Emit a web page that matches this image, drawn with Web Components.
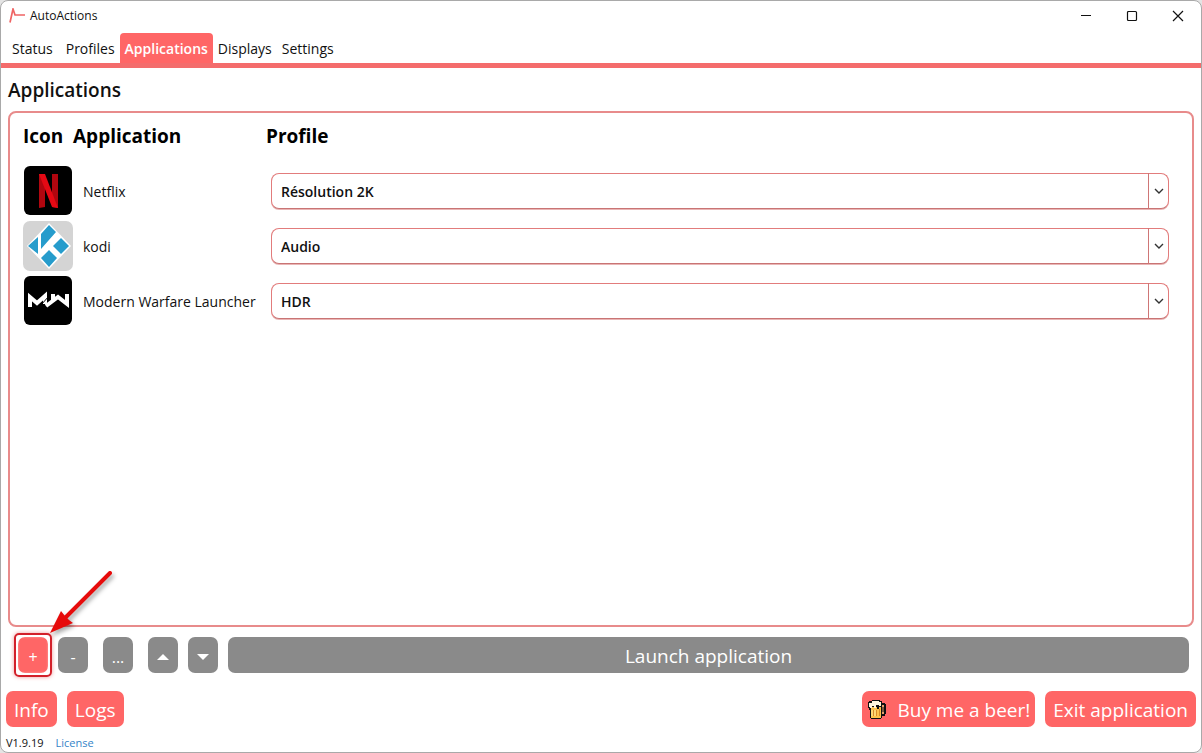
<!DOCTYPE html>
<html lang="en">
<head>
<meta charset="utf-8">
<meta name="viewport" content="width=device-width, initial-scale=1">
<title>AutoActions</title>
<style>
  :root {
    --accent: #ff6666;
    --line: #e88b8b;
    --muted: #8a8a8a;
  }
  html, body {
    margin: 0;
    height: 100%;
    background: #e4e4e4;
    font-family: "Open Sans", "Noto Sans", sans-serif;
    font-size: 14px;
    color: #111;
  }
</style>
</head>
<body>
<auto-window caption="AutoActions">
  <tab-strip slot="tabs" items="Status,Profiles,Applications,Displays,Settings" active="Applications"></tab-strip>
  <page-panel heading="Applications">
    <app-list></app-list>
  </page-panel>
  <tool-bar slot="tools"></tool-bar>
  <window-footer slot="footer" version="V1.9.19">
    <action-button slot="left">Info</action-button>
    <action-button slot="left">Logs</action-button>
    <action-button slot="right" compact><beer-icon slot="icon"></beer-icon>Buy me a beer!</action-button>
    <action-button slot="right">Exit application</action-button>
  </window-footer>
</auto-window>

<script>
function define(name, html, setup) {
  const template = document.createElement('template');
  template.innerHTML = `<style>* { box-sizing: border-box; }</style>${html}`;

  customElements.define(name, class extends HTMLElement {
    constructor() {
      super();
      this.attachShadow({ mode: 'open' });
      this.shadowRoot.appendChild(template.content.cloneNode(true));
    }

    connectedCallback() {
      if (setup && !this.ready) {
        this.ready = true;
        setup(this, this.shadowRoot);
      }
    }
  });
}

define('auto-window', `
  <style>
    :host {
      box-sizing: border-box;
      display: flex;
      flex-direction: column;
      min-height: 100vh;
      border: 1px solid #a9a9a9;
      border-radius: 8px;
      background: #fff;
      overflow: hidden;
    }
    header {
      display: flex;
      align-items: center;
      justify-content: space-between;
      height: 30px;
    }
    .title {
      display: flex;
      align-items: center;
      gap: 5px;
      padding-left: 8px;
      font-size: 12px;
      line-height: 16px;
    }
    .controls {
      display: flex;
    }
    .controls button {
      display: grid;
      place-items: center;
      width: 46px;
      height: 30px;
      padding: 0;
      border: 0;
      background: none;
    }
    svg {
      display: block;
      fill: none;
      stroke: #111;
      stroke-width: 1.2;
    }
    main {
      flex: 1;
      display: flex;
    }
  </style>
  <header>
    <div class="title">
      <svg width="16" height="16" viewBox="0 0 16 16" style="stroke:#ef6464;stroke-width:1.7"><path d="M1 14.500 4 1l2 6h10"/></svg>
      <span></span>
    </div>
    <div class="controls">
      <button aria-label="Minimize"><svg width="12" height="12"><path d="M1 5.500h10"/></svg></button>
      <button aria-label="Maximize"><svg width="12" height="12"><rect x="1.500" y="1.500" width="9" height="9" rx="1"/></svg></button>
      <button aria-label="Close"><svg width="12" height="12"><path d="m1 1 10 10M11 1 1 11"/></svg></button>
    </div>
  </header>
  <slot name="tabs"></slot>
  <main><slot></slot></main>
  <slot name="tools"></slot>
  <slot name="footer"></slot>
`, (host, root) => {
  root.querySelector('.title span').textContent = host.getAttribute('caption');
});

define('tab-strip', `
  <style>
    :host {
      display: flex;
      padding: 2px 6px 0;
      border-bottom: 5px solid #f46c6c;
    }
    button {
      height: 30px;
      padding: 0 5px;
      border: 0;
      border-radius: 4px 4px 0 0;
      background: none;
      font: inherit;
      color: inherit;
    }
    button:first-of-type {
      margin-right: 3px;
    }
    button[aria-selected=true] {
      background: var(--accent);
      color: #fff;
      font-weight: 600;
    }
  </style>
`, (host, root) => {
  host.setAttribute('role', 'tablist');
  for (const name of host.getAttribute('items').split(',')) {
    const button = document.createElement('button');
    button.setAttribute('role', 'tab');
    button.setAttribute('aria-selected', name === host.getAttribute('active'));
    button.textContent = name;
    root.appendChild(button);
  }
});

define('page-panel', `
  <style>
    :host {
      flex: 1;
      display: flex;
      flex-direction: column;
      padding: 7px 7px 0;
    }
    h1 {
      margin: 0 0 6px;
      font-size: 19px;
      line-height: 30px;
      font-weight: 600;
    }
    .frame {
      flex: 1;
      padding: 8px 23px 8px 13px;
      border: 2px solid var(--line);
      border-radius: 8px;
    }
  </style>
  <h1></h1>
  <div class="frame"><slot></slot></div>
`, (host, root) => {
  root.querySelector('h1').textContent = host.getAttribute('heading');
});

define('app-icon', `
  <style>
    :host { display: block; width: 50px; height: 50px; }
    svg { display: block; }
  </style>
`, (host, root) => {
  const icons = {
    netflix: `<rect x="1" width="48" height="49" rx="6" fill="#000"/>
      <path d="M16 8h6v33l-6 1zM29 8h6v34l-6-1z" fill="#b1060f"/>
      <path d="M16 8h6l13 34-6-1z" fill="#e50914"/>`,
    kodi: `<rect width="50" height="50" rx="7" fill="#d4d4d4"/>
      <path d="M26 2 48 25 26 48 4 25z" fill="#fff"/>
      <path fill="#269ccc" d="m26 4 7 7-15 17V13zM15 16v17l-10-8zM38 17l8 8-8 8-8-8zM26 29l8 8-8 9-8-9z"/>`,
    mw: `<rect x="1" width="48" height="49" rx="6" fill="#000"/>
      <path fill="none" stroke="#fff" stroke-width="4" d="M7 31V21l7 6 8-7v8M44 18v10l-9-7-12 9M30 18v7"/>
      <path stroke="#000" d="m18 29 8-9"/>`
  };
  root.innerHTML += `<svg width="50" height="50" viewBox="0 0 50 50">${icons[host.getAttribute('name')]}</svg>`;
});

define('profile-select', `
  <style>
    :host {
      position: relative;
      display: block;
    }
    select {
      display: block;
      width: 100%;
      height: 36px;
      padding: 1px 30px 0 9px;
      appearance: none;
      border: 1px solid #e27c7c;
      border-bottom-color: #c97474;
      border-radius: 8px;
      background: #fff;
      box-shadow: 0 1px 0 #e9b6b6;
      font: inherit;
      font-weight: 600;
      color: inherit;
    }
    /* divider and arrow lie over the right end of the select */
    .arrow {
      position: absolute;
      inset: 0 0 0 auto;
      display: grid;
      place-items: center;
      width: 21px;
      border-left: 1px solid #cf7676;
      pointer-events: none;
    }
  </style>
  <select></select>
  <span class="arrow">
    <svg width="10" height="6" fill="none" stroke="#333" stroke-width="1.4"><path d="m1 1 4 4 4-4"/></svg>
  </span>
`, (host, root) => {
  const select = root.querySelector('select');
  select.setAttribute('aria-label', host.getAttribute('label'));
  select.add(new Option(host.getAttribute('value')));
});

define('app-list', `
  <style>
    :host { display: block; }
    table {
      width: 100%;
      border-collapse: collapse;
      table-layout: fixed;
    }
    th {
      height: 30px;
      padding: 0;
      text-align: left;
      font-size: 19px;
      line-height: 24px;
      font-weight: 700;
      color: #000;
    }
    thead::after {
      content: "";
      display: block;
      height: 12px;
    }
    th:nth-child(1) { width: 50px; }
    th:nth-child(2) { width: 193px; }
    td {
      height: 55px;
      padding: 0;
      vertical-align: middle;
      white-space: nowrap;
    }
    td:nth-child(2) { padding: 1px 0 0 10px; }
    td:nth-child(3) { padding: 1px 0 0 5px; }
  </style>
  <table>
    <thead><tr><th>Icon</th><th>Application</th><th>Profile</th></tr></thead>
    <tbody></tbody>
  </table>
`, (host, root) => {
  const apps = [
    ['netflix', 'Netflix', 'Résolution 2K'],
    ['kodi', 'kodi', 'Audio'],
    ['mw', 'Modern Warfare Launcher', 'HDR']
  ];
  root.querySelector('tbody').innerHTML = apps.map(([icon, name, profile]) => `
    <tr>
      <td><app-icon name="${icon}"></app-icon></td>
      <td>${name}</td>
      <td><profile-select label="Profile for ${name}" value="${profile}"></profile-select></td>
    </tr>`).join('');
});

define('callout-mark', `
  <style>
    :host { position: relative; display: flex; }
    .ring {
      position: absolute;
      inset: -4px;
      border: 2px solid #d3202a;
      border-radius: 5px;
      box-shadow: 0 0 4px #e99, inset 0 0 3px 1px #fff;
      pointer-events: none;
    }
    svg {
      position: absolute;
      left: 29px;
      bottom: 35px;
      filter: drop-shadow(2px 3px 2px #0005);
      pointer-events: none;
    }
  </style>
  <slot></slot>
  <span class="ring"></span>
  <svg width="72" height="72" viewBox="0 0 72 72">
    <path d="M63 7 18 52" stroke="#e60b0b" stroke-width="4" stroke-linecap="round"/>
    <path d="m3 67 11-22 4 5 4 4 4 3z" fill="#e60b0b"/>
  </svg>
`);

define('tool-bar', `
  <style>
    :host {
      display: flex;
      gap: 10px;
      padding: 10px 12px 0 17px;
    }
    button {
      display: flex;
      align-items: center;
      justify-content: center;
      width: 30px;
      height: 36px;
      padding: 4px 0 0;
      border: 0;
      border-radius: 7px;
      background: var(--muted);
      color: #fff;
      font: inherit;
      font-size: 16px;
    }
    .add { background: var(--accent); }
    .group { display: flex; gap: 15px; }
    .launch {
      flex: 1;
      padding: 2px 0 0;
      font-size: 19px;
    }
  </style>
  <callout-mark><button class="add" aria-label="Add">+</button></callout-mark>
  <div class="group">
    <button>-</button>
    <button>...</button>
    <button aria-label="Move up"><svg width="12" height="6" fill="#fff"><path d="m0 6 6-6 6 6z"/></svg></button>
  </div>
  <button aria-label="Move down"><svg width="12" height="6" fill="#fff"><path d="m0 0 6 6 6-6z"/></svg></button>
  <button class="launch">Launch application</button>
`);

define('action-button', `
  <style>
    :host { display: block; }
    button {
      display: flex;
      align-items: center;
      gap: 10px;
      height: 36px;
      padding: 2px 8px 0;
      border: 0;
      border-radius: 7px;
      background: var(--accent);
      color: #fff;
      font: inherit;
      font-size: 19px;
      white-space: nowrap;
    }
    :host([compact]) button { padding: 2px 5px 0; }
  </style>
  <button><slot name="icon"></slot><span><slot></slot></span></button>
`);

define('beer-icon', `
  <style>:host, svg { display: block; }</style>
  <svg width="20" height="20" viewBox="0 0 20 20">
    <path d="M2 1h3V0h8v1h2v2h3v1h1v10h-1v2h-3v2h-1v1H4v-1H3v-8H2V8H1V2h1z" fill="#111"/>
    <path d="M4 7h10v11H4z" fill="#ffc44d"/>
    <path d="M2 3h3V1h7v1h2v4h-2V5H9v3H7V6H5v2H3V7H2z" fill="#fff5dc"/>
    <path d="M15 5h2v9h-2z" fill="#e7a06b"/>
    <path d="M16 7v5" stroke="#111"/>
    <path d="M10 6h2v3h-2z" fill="#111"/>
    <path d="M6.500 10v6M9.500 10v6M12.500 9v7" stroke="#d88b2c"/>
    <path d="M5 10v6M8 10v6" stroke="#fff0a0"/>
  </svg>
`);

define('window-footer', `
  <style>
    :host {
      display: block;
      padding: 18px 5px 0;
    }
    .row, .side { display: flex; gap: 10px; }
    .row { justify-content: space-between; }
    .info {
      display: flex;
      gap: 12px;
      padding-top: 6px;
      font-size: 11px;
      line-height: 19px;
    }
    a { color: #3484c8; text-decoration: none; }
  </style>
  <div class="row">
    <div class="side"><slot name="left"></slot></div>
    <div class="side"><slot name="right"></slot></div>
  </div>
  <div class="info"><span></span><a href="#license">License</a></div>
`, (host, root) => {
  root.querySelector('.info span').textContent = host.getAttribute('version');
});
</script>
</body>
</html>
